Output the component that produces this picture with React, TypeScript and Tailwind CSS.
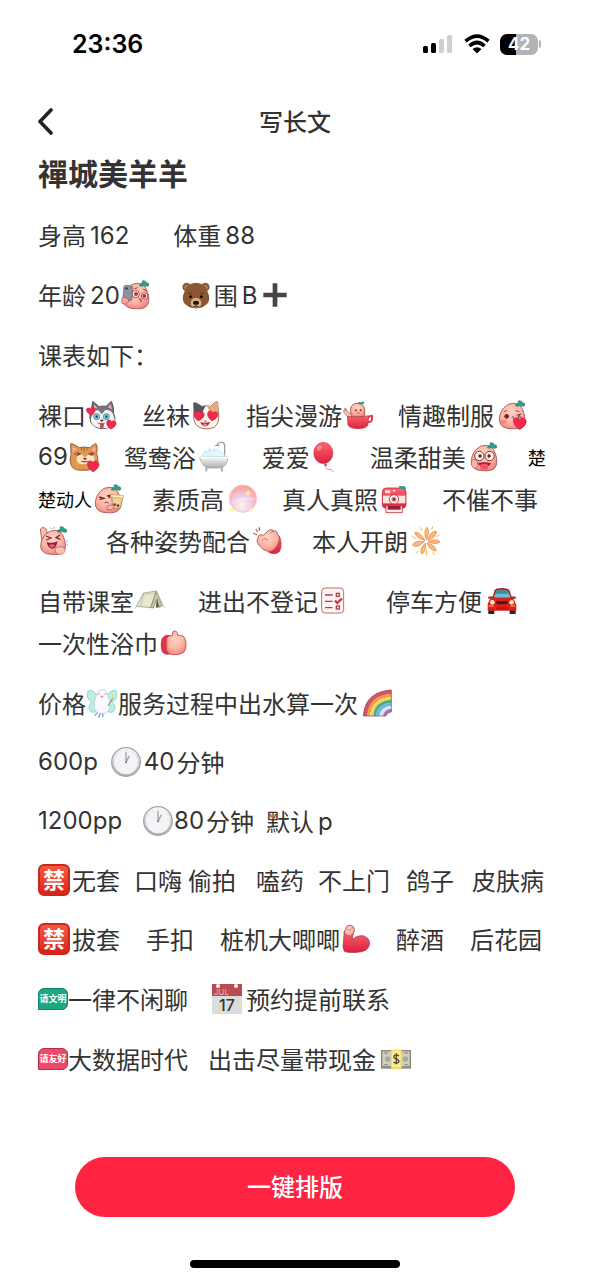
import type { ReactNode } from "react";

const LINE = "#a4514a";

function Svg({ children }: { children: ReactNode }) {
  return (
    <svg viewBox="0 0 96 96" className="size-8 shrink-0" aria-hidden="true">
      <defs>
        <radialGradient id="peach" cx="45%" cy="35%" r="70%">
          <stop offset="0" stopColor="#ffd3c4" />
          <stop offset="0.6" stopColor="#fbb3a4" />
          <stop offset="1" stopColor="#f07f7c" />
        </radialGradient>
        <linearGradient id="red" x1="0" y1="0" x2="0" y2="1">
          <stop offset="0" stopColor="#fb6570" />
          <stop offset="1" stopColor="#dc1f3c" />
        </linearGradient>
        <linearGradient id="silver" x1="0" y1="0" x2="0" y2="1">
          <stop offset="0" stopColor="#fafafa" />
          <stop offset="1" stopColor="#a9adb3" />
        </linearGradient>
      </defs>
      {children}
    </svg>
  );
}

function Leaf() {
  return (
    <path
      d="M58 20 Q60 12 68 13 Q62 4 72 5 Q78 6 79 11 Q88 10 86 20 Q79 25 72 19 Q66 24 58 20Z"
      fill="#27a383"
      stroke="#16775f"
      strokeWidth="1.5"
    />
  );
}

function PeachBody() {
  return (
    <path
      d="M52 13 Q74 12 83 40 Q91 66 81 80 Q70 92 42 89 Q14 88 10 66 Q9 43 23 27 Q36 12 52 13Z"
      fill="url(#peach)"
      stroke={LINE}
      strokeWidth="2.5"
    />
  );
}

function Heart({ at }: { at: string }) {
  return (
    <path
      transform={at}
      d="M0 12 C-17 1 -14 -12 -6 -12 Q-1 -12 0 -7 Q3 -13 9 -11 C18 -6 12 6 0 12Z"
      fill="#f5274c"
      stroke="#b31c35"
      strokeWidth="1.5"
    />
  );
}

function Selfie() {
  return (
    <Svg>
      <PeachBody />
      <Leaf />
      <circle cx="47" cy="45" r="11" fill="#fff3ef" stroke="#9b2b32" strokeWidth="2.5" />
      <circle cx="48" cy="45" r="6" fill="#c02b3a" />
      <circle cx="74" cy="51" r="10" fill="#fff3ef" stroke="#9b2b32" strokeWidth="2.5" />
      <circle cx="73" cy="51" r="6" fill="#c02b3a" />
      <path d="M56 60 q9 -2 5 4 q8 1 0 6" fill="none" stroke="#8f2630" strokeWidth="3" />
      <path d="M43 29 l10 -3 M70 31 l10 4" stroke="#8f3b35" strokeWidth="3" />
      <rect x="10" y="20" width="27" height="44" rx="5" fill="#8b939d" stroke="#5d646f" strokeWidth="2" transform="rotate(5 25 42)" />
      <circle cx="20" cy="28" r="3.5" fill="#2e3440" />
      <path d="M5 64 Q5 52 15 56 Q27 57 26 68 Q20 78 9 75 Q4 72 5 64Z" fill="#f9a498" stroke={LINE} strokeWidth="2" />
    </Svg>
  );
}

function Bear() {
  return (
    <Svg>
      <circle cx="20" cy="24" r="13" fill="#8c5a38" />
      <circle cx="76" cy="24" r="13" fill="#8c5a38" />
      <circle cx="20" cy="25" r="7" fill="#b17e55" />
      <circle cx="76" cy="25" r="7" fill="#b17e55" />
      <path d="M48 11 Q76 12 82 37 Q93 59 83 73 Q69 89 48 88 Q27 89 13 73 Q3 59 14 37 Q20 12 48 11Z" fill="#8b5735" />
      <ellipse cx="48" cy="72" rx="16" ry="15" fill="#d9b183" />
      <ellipse cx="48" cy="71" rx="9" ry="6" fill="#1c1512" />
      <path d="M48 76 v6 M40 82 q8 5 16 0" stroke="#39261a" strokeWidth="3" fill="none" />
      <circle cx="32" cy="53" r="4.500" fill="#17110e" />
      <circle cx="64" cy="53" r="4.500" fill="#17110e" />
      <path d="M24 42 l12 3 M72 42 l-12 3" stroke="#5c351e" strokeWidth="3" />
    </Svg>
  );
}

function Plus() {
  return (
    <Svg>
      <path d="M41 13 h14 v28 h28 v14 h-28 v28 h-14 v-28 h-28 v-14 h28z" fill="#454545" />
    </Svg>
  );
}

function Husky() {
  return (
    <Svg>
      <path d="M15 38 L20 7 L40 23 Q51 20 60 22 L76 7 Q84 20 83 44 Q92 63 80 78 Q67 90 48 89 Q20 87 13 66 Q9 49 15 38Z" fill="#77747f" stroke="#4b4a55" strokeWidth="2.5" />
      <path d="M22 29 l3 -12 9 10z M66 25 l8 -9 4 15z" fill="#f7a99d" />
      <path d="M16 55 Q20 30 37 34 L47 46 L58 33 Q78 30 83 52 Q91 73 74 83 Q49 93 24 81 Q11 69 16 55Z" fill="#fbf3ee" />
      <circle cx="32" cy="53" r="9" fill="#8ddcf3" stroke="#397d96" strokeWidth="2.5" />
      <circle cx="61" cy="53" r="9" fill="#8ddcf3" stroke="#397d96" strokeWidth="2.5" />
      <circle cx="32" cy="53" r="4" fill="#244c60" />
      <circle cx="61" cy="53" r="4" fill="#244c60" />
      <path d="M43 63 h9 l-5 5z" fill="#512d31" stroke="#512d31" strokeWidth="2" />
      <path d="M35 72 Q47 75 57 72 M43 75 v10 q5 6 9 0 v-10z" fill="#f0476a" stroke="#873d46" strokeWidth="2" />
      <Heart at="translate(15 37) rotate(-15)" />
      <Heart at="translate(75 77) rotate(8) scale(1.1)" />
    </Svg>
  );
}

function Cat() {
  return (
    <Svg>
      <path d="M12 45 L11 12 Q15 7 35 22 Q49 18 62 22 Q80 3 83 9 L86 49 Q88 74 72 85 Q47 96 23 82 Q8 69 12 45Z" fill="#fff4eb" stroke="#92523c" strokeWidth="2.5" />
      <path d="M12 43 L11 12 Q15 8 35 22 L46 21 L38 39Z" fill="#55565c" />
      <path d="M52 20 L63 22 Q80 4 83 10 L85 43 L57 36Z" fill="#e9a974" />
      <Heart at="translate(26 51) rotate(8) scale(1.2)" />
      <Heart at="translate(67 51) rotate(8) scale(1.2)" />
      <path d="M31 70 q15 3 29 -1 q-5 13 -15 13 q-10 0 -14 -12Z" fill="#b32643" />
      <path d="M37 76 q8 -5 15 1 q-7 11 -15 -1Z" fill="#ff7890" />
      <path d="M42 65 h9 l-5 4z" fill="#5c2b2f" />
    </Svg>
  );
}

function Cup() {
  return (
    <Svg>
      <path d="M26 52 V27 Q30 13 47 13 Q65 14 68 30 V53Z" fill="url(#peach)" stroke={LINE} strokeWidth="2.5" />
      <path d="M46 14 Q49 6 58 10 Q65 4 67 14 Q58 18 46 14Z" fill="#27a383" />
      <path d="M24 59 L5 40 Q4 31 10 36 L8 27 Q12 25 16 37 L29 48Z" fill="#fac0b0" stroke={LINE} strokeWidth="2" />
      <path d="M76 58 Q93 43 90 57 Q92 70 77 69" fill="none" stroke="#e9344c" strokeWidth="6" />
      <path d="M16 52 Q47 59 80 50 L78 77 Q73 89 47 89 Q22 88 18 78Z" fill="url(#red)" stroke="#c22f40" strokeWidth="2" />
      <circle cx="42" cy="34" r="3" fill="#792f2e" />
      <circle cx="56" cy="34" r="3" fill="#792f2e" />
      <path d="M44 41 q5 4 9 0" fill="none" stroke="#792f2e" strokeWidth="2" />
    </Svg>
  );
}

function KissPeach() {
  return (
    <Svg>
      <PeachBody />
      <Leaf />
      <circle cx="32" cy="52" r="7" fill="#7f2028" />
      <path d="M62 49 l12 -4 -8 9 11 1" fill="none" stroke="#7f2028" strokeWidth="3" />
      <path d="M47 54 q9 -2 5 5 q8 2 0 6" fill="none" stroke="#9d2b35" strokeWidth="3" />
      <ellipse cx="23" cy="68" rx="9" ry="6" fill="#f46d79" opacity=".6" />
      <path d="M23 39 l10 -5 M58 35 l12 3" stroke={LINE} strokeWidth="3" />
      <Heart at="translate(71 74) scale(1.45)" />
    </Svg>
  );
}

function FoxCat() {
  return (
    <Svg>
      <path d="M9 44 L8 8 Q11 6 34 20 Q50 16 65 20 L83 7 Q90 13 86 38 Q96 64 79 79 Q63 91 41 88 Q13 88 9 70 Q3 57 9 44Z" fill="#e0984c" stroke="#8c472d" strokeWidth="2.5" />
      <path d="M13 19 l13 5 -12 10z M81 17 l-11 8 12 9z" fill="#f5b0a1" />
      <path d="M26 58 Q24 39 42 40 L50 50 L63 38 Q84 42 79 58 Q67 76 50 68 Q33 75 26 58Z" fill="#ffe2bf" />
      <path d="M48 20 v11 M40 22 v6 M57 22 v6" stroke="#a75133" strokeWidth="3" />
      <path d="M20 39 Q28 31 38 39 Q29 47 20 39Z M61 39 Q70 31 80 38 Q71 47 61 39Z" fill="#fff" stroke="#81302d" strokeWidth="2.5" />
      <circle cx="31" cy="39" r="4" fill="#8c3b2f" />
      <circle cx="71" cy="39" r="4" fill="#8c3b2f" />
      <path d="M46 52 h10 l-5 5z M39 61 q11 5 22 -1" fill="#a7273d" stroke="#a7273d" strokeWidth="2" />
      <Heart at="translate(75 76) scale(1.35)" />
    </Svg>
  );
}

function Bathtub() {
  return (
    <Svg>
      <path d="M80 51 V13 Q79 3 68 4 Q57 5 58 15" fill="none" stroke="#9b9fa3" strokeWidth="4" />
      <path d="M49 15 q9 -7 18 0z" fill="#8a9095" />
      <path d="M14 45 Q13 28 27 35 Q33 17 45 31 Q56 19 65 33 Q80 31 79 47Z" fill="#e2f8ff" stroke="#b5e3ef" strokeWidth="2" />
      <path d="M23 27 v9 M35 23 v10 M48 25 v8 M61 19 v9" stroke="#8bd5ec" strokeWidth="3" strokeDasharray="3 4" />
      <path d="M4 48 H90 Q90 74 68 81 H29 Q12 76 4 48Z" fill="url(#silver)" stroke="#989da3" strokeWidth="2" />
      <path d="M25 79 v10 M72 77 v12" stroke="#aeb2b7" strokeWidth="6" strokeLinecap="round" />
      <path d="M4 49 H90" stroke="#fff" strokeWidth="4" />
    </Svg>
  );
}

function Balloon() {
  return (
    <Svg>
      <ellipse cx="40" cy="36" rx="29" ry="32" fill="url(#red)" stroke="#d42e46" strokeWidth="1.5" />
      <ellipse cx="28" cy="21" rx="6" ry="9" fill="#ff9ba0" opacity=".7" transform="rotate(35 28 21)" />
      <path d="M46 67 l-5 8 12 -2Z" fill="#cf2842" />
      <path d="M48 75 Q45 85 57 85 Q68 85 70 93" fill="none" stroke="#ba8790" strokeWidth="2.5" />
    </Svg>
  );
}

function GlassesPeach() {
  return (
    <Svg>
      <PeachBody />
      <Leaf />
      <circle cx="34" cy="45" r="14" fill="#fff0e9" stroke="#923333" strokeWidth="3" />
      <circle cx="65" cy="45" r="14" fill="#fff0e9" stroke="#923333" strokeWidth="3" />
      <circle cx="36" cy="45" r="5" fill="#581d25" />
      <circle cx="63" cy="45" r="5" fill="#581d25" />
      <path d="M29 66 Q48 61 70 66 Q64 78 48 78 Q34 78 29 66Z" fill="#9f2338" />
      <path d="M37 71 Q49 65 60 71 V83 Q50 90 37 83Z" fill="#fa5365" />
      <path d="M10 59 q12 -9 18 3 q4 15 -5 20 q-14 0 -13 -23Z" fill="#fbb4a4" stroke={LINE} strokeWidth="2" />
    </Svg>
  );
}

function TeaPeach() {
  return (
    <Svg>
      <PeachBody />
      <Leaf />
      <path d="M21 42 l15 4 -13 4 M45 39 l14 -3 -9 9" fill="none" stroke="#81272b" strokeWidth="4" />
      <path d="M38 59 q7 -5 12 2" fill="none" stroke="#a33c3e" strokeWidth="3" />
      <path d="M59 40 L92 43 L86 75 Q74 80 62 73Z" fill="#efd09a" stroke="#955e40" strokeWidth="2" />
      <path d="M56 34 L95 38 L93 46 L56 42Z" fill="#fff0bb" stroke="#d1953f" strokeWidth="2" />
      <circle cx="68" cy="65" r="4" fill="#6a3e2e" />
      <circle cx="78" cy="68" r="4" fill="#6a3e2e" />
      <path d="M45 70 Q60 61 66 73 Q58 85 45 79Z" fill="#fbb4a4" stroke={LINE} strokeWidth="2" />
    </Svg>
  );
}

function Pearl() {
  return (
    <Svg>
      <defs>
        <radialGradient id="pearl" cx="45%" cy="75%" r="75%">
          <stop offset="0" stopColor="#fff3ea" />
          <stop offset="0.45" stopColor="#f0cdea" />
          <stop offset="1" stopColor="#fa9a92" />
        </radialGradient>
      </defs>
      <circle cx="51" cy="47" r="41" fill="url(#pearl)" stroke="#fbc8ba" strokeWidth="3" />
      <path d="M17 61 Q46 39 86 49" stroke="#fff" strokeWidth="5" opacity=".35" fill="none" />
      <path d="M66 19 l3 9 9 3 -9 3 -3 9 -3 -9 -9 -3 9 -3z M17 70 l3 9 9 3 -9 3 -3 9 -3 -9 -9 -3 9 -3z M76 73 l2 6 6 2 -6 2 -2 6 -2 -6 -6 -2 6 -2z" fill="#fff39b" />
    </Svg>
  );
}

function Camera() {
  return (
    <Svg>
      <rect x="13" y="15" width="71" height="61" rx="12" fill="url(#red)" stroke="#c02c40" strokeWidth="2.5" />
      <path d="M62 12 Q64 5 73 10 Q84 7 84 17 Q73 22 62 12Z" fill="#27a383" />
      <rect x="21" y="22" width="16" height="9" rx="3" fill="#ffe7e2" />
      <circle cx="48" cy="23" r="3" fill="#fff" />
      <path d="M15 38 H82 V61 H15Z" fill="#ffe3e0" />
      <circle cx="48" cy="49" r="14" fill="#fff2ed" stroke="#c93a50" strokeWidth="3" />
      <circle cx="48" cy="49" r="7" fill="#d4687a" />
      <circle cx="48" cy="49" r="3" fill="#651c2b" />
      <path d="M24 68 H73 V89 H24Z" fill="#ffefea" stroke="#c02c40" strokeWidth="2.5" />
      <path d="M29 69 H68 V80 H29Z" fill="#9f1c31" />
    </Svg>
  );
}

function LaughPeach() {
  return (
    <Svg>
      <path d="M12 48 L7 15 Q9 5 20 9 Q29 12 27 40Z" fill="#fac0b0" stroke={LINE} strokeWidth="2.5" />
      <path d="M52 16 Q71 15 78 40 Q87 65 77 79 Q67 91 42 88 Q11 88 8 66 Q8 43 23 27 Q36 15 52 16Z" fill="url(#peach)" stroke={LINE} strokeWidth="2.5" />
      <Leaf />
      <path d="M24 33 l15 6 -14 6 M66 30 l-12 8 13 5" fill="none" stroke="#772127" strokeWidth="3.5" />
      <path d="M26 51 Q43 57 58 49 Q57 68 43 72 Q29 68 26 51Z" fill="#8e2036" />
      <path d="M33 60 Q42 55 51 60 Q43 76 33 60Z" fill="#ff5b71" />
      <path d="M52 69 Q71 59 82 73 Q80 90 60 88 Q49 83 52 69Z" fill="#fac0b0" stroke={LINE} strokeWidth="2" />
      <path d="M38 8 l4 4 M48 5 v6 M84 48 l5 2 M85 56 l4 4" stroke="#55b9d8" strokeWidth="3" />
    </Svg>
  );
}

function Clap() {
  return (
    <Svg>
      <path d="M55 26 L82 33 Q93 60 82 80 Q68 91 50 82Z" fill="url(#red)" stroke="#a13440" strokeWidth="2" />
      <path d="M18 39 Q19 25 34 31 L50 16 Q60 10 65 18 Q76 16 77 29 Q87 35 80 51 Q74 72 55 80 Q36 79 24 64 Q10 49 18 39Z" fill="url(#peach)" stroke={LINE} strokeWidth="2.5" />
      <path d="M30 47 q8 -12 18 -1 M65 18 q-5 1 -9 6" fill="none" stroke={LINE} strokeWidth="2" />
      <path d="M5 25 l9 4 M12 13 l5 7 M22 8 v8" stroke="#a8322f" strokeWidth="3" strokeLinecap="round" />
    </Svg>
  );
}

function Fireworks() {
  return (
    <Svg>
      <g fill="#ffba6d" stroke="#e8744c" strokeWidth="2">
        <path d="M45 46 Q20 40 14 23 Q27 17 45 46Z" />
        <path d="M49 44 Q39 18 51 7 Q61 18 49 44Z" />
        <path d="M53 46 Q61 17 79 19 Q80 37 53 46Z" />
        <path d="M54 50 Q79 39 90 50 Q79 61 54 50Z" />
        <path d="M51 54 Q79 61 78 78 Q61 78 51 54Z" />
        <path d="M46 54 Q49 80 36 87 Q25 76 46 54Z" />
        <path d="M43 50 Q20 71 8 61 Q10 47 43 50Z" />
      </g>
      <g fill="none" stroke="#f6b92b" strokeWidth="3" strokeLinecap="round">
        <path d="M31 8 l4 8 M68 5 l-3 9 M87 31 l-7 4 M7 35 l10 5 M24 78 l-5 7 M50 77 v12 M69 83 l4 6" />
      </g>
    </Svg>
  );
}

function Tent() {
  return (
    <Svg>
      <path d="M7 64 L29 24 L67 18 L50 68Z" fill="#e8e8cf" stroke="#8d8d74" strokeWidth="2" />
      <path d="M67 18 L50 68 L58 69 L69 43 L75 67 L85 63Z" fill="#c5c5a2" stroke="#7c7c62" strokeWidth="2" />
      <path d="M69 41 L65 68 L75 67Z" fill="#5d5e4a" />
      <path d="M29 24 L20 64 M67 18 L92 69 M7 64 L2 72 M25 30 L63 24" stroke="#a3a38b" strokeWidth="1.5" />
    </Svg>
  );
}

function Checklist() {
  return (
    <Svg>
      <rect x="11" y="9" width="66" height="75" rx="10" fill="#fff5f2" stroke="#b97073" strokeWidth="3" />
      <g fill="none" stroke="#a6424d" strokeWidth="4">
        <path d="M21 30 h23 M21 49 h23 M21 68 h23" />
        <rect x="55" y="25" width="9" height="9" />
        <rect x="55" y="63" width="9" height="9" />
      </g>
      <path d="M51 47 l7 7 14 -13" stroke="#dd2e43" strokeWidth="7" fill="none" />
    </Svg>
  );
}

function Car() {
  return (
    <Svg>
      <path d="M10 38 H86" stroke="#aa251d" strokeWidth="7" strokeLinecap="round" />
      <path d="M18 42 L26 16 Q30 9 48 9 Q67 9 71 17 L79 42Z" fill="#b51b17" />
      <path d="M23 38 L31 17 Q47 11 66 18 L74 38Z" fill="#68bfd1" />
      <path d="M31 17 Q47 11 66 18 L69 26 H27Z" fill="#3d8da4" />
      <path d="M7 70 V87 H25 V72 M71 72 V87 H89 V68" fill="#252527" />
      <path d="M12 43 Q17 35 30 38 H67 Q83 37 86 48 L91 61 V77 H5 V57Z" fill="#dc211c" />
      <circle cx="19" cy="52" r="7" fill="#ffeeb0" />
      <circle cx="77" cy="52" r="7" fill="#ffeeb0" />
      <path d="M29 49 H66 L62 58 H34Z" fill="#49191a" />
      <path d="M32 67 H64 V74 H32Z" fill="#b81614" />
      <path d="M8 63 h15 M73 63 h15" stroke="#ff795d" strokeWidth="4" />
    </Svg>
  );
}

function Thumb() {
  return (
    <Svg>
      <path d="M13 34 Q23 21 38 27 V80 Q24 86 13 75 Q6 54 13 34Z" fill="#e83148" stroke="#a7313b" strokeWidth="2.5" />
      <path d="M25 44 Q25 24 43 26 L45 14 Q54 7 58 18 L59 25 Q78 22 82 38 Q88 60 78 75 Q64 86 37 82 Q22 78 25 44Z" fill="url(#peach)" stroke="#c14649" strokeWidth="2.5" />
      <path d="M30 39 Q25 58 33 76" fill="none" stroke="#f08b88" strokeWidth="3" />
    </Svg>
  );
}

function Fairy() {
  return (
    <Svg>
      <g fill="#b9efe1" stroke="#86cfca" strokeWidth="2.5">
        <path d="M42 40 Q22 2 6 12 Q-2 34 18 46 Q2 58 14 74 Q30 82 42 60Z" />
        <path d="M54 40 Q74 2 90 12 Q98 34 78 46 Q94 58 82 74 Q66 82 54 60Z" />
      </g>
      <path d="M48 8 Q63 8 65 26 Q76 44 70 66 Q62 82 46 80 Q28 78 25 62 Q23 42 31 26 Q34 8 48 8Z" fill="#f9faff" stroke="#b6c2df" strokeWidth="2" />
      <path d="M40 26 h15 l-7 7z" fill="#ee9498" />
      <circle cx="38" cy="21" r="2" fill="#7d7b97" />
      <circle cx="58" cy="21" r="2" fill="#7d7b97" />
      <path d="M34 77 l-8 9 M42 80 l-4 12 M50 80 v10" stroke="#7d99c5" strokeWidth="4" />
      <path d="M66 57 L80 34" stroke="#778b42" strokeWidth="3" />
      <path d="M76 34 l5 -11 4 13z" fill="#f5d35c" />
    </Svg>
  );
}

function Rainbow() {
  return (
    <Svg>
      <g fill="none" strokeWidth="9">
        <path d="M10 87 Q14 20 88 15" stroke="#d95162" strokeWidth="12" />
        <path d="M20 87 Q24 30 88 25" stroke="#f19c4a" />
        <path d="M29 87 Q33 39 88 34" stroke="#f5d455" />
        <path d="M38 87 Q42 47 88 43" stroke="#50a984" />
        <path d="M47 87 Q51 56 88 52" stroke="#67b8df" />
        <path d="M57 87 Q60 65 88 61" stroke="#d8e7ff" />
        <path d="M67 87 Q70 73 88 70" stroke="#a86fc5" />
      </g>
      <path d="M4 87 Q9 14 88 9 V75 Q74 76 72 87Z" fill="none" stroke="#6f4650" strokeWidth="2" />
    </Svg>
  );
}

function Clock() {
  return (
    <Svg>
      <circle cx="48" cy="48" r="43" fill="url(#silver)" stroke="#a4a7ac" strokeWidth="4" />
      <circle cx="48" cy="49" r="36" fill="#f3f4f5" />
      <circle cx="48" cy="48" r="35" fill="none" stroke="#9da1a7" strokeWidth="3" strokeDasharray="1 17.3" />
      <path d="M48 49 V19 M48 49 L57 31" stroke="#a0a4ab" strokeWidth="4" strokeLinecap="round" />
      <circle cx="48" cy="49" r="3" fill="#777d85" />
    </Svg>
  );
}

function Forbidden() {
  return (
    <span className="flex size-8 shrink-0 items-center justify-center rounded-md border-2 border-[#c92720] bg-linear-to-b from-[#f45742] to-[#db2117] pb-1 text-[22px] leading-none font-bold text-white">
      禁
    </span>
  );
}

function Muscle() {
  return (
    <Svg>
      <path d="M9 72 L13 24 L40 31 L36 51 Q48 37 68 38 Q90 43 89 64 Q84 84 60 87 Q27 91 13 85Z" fill="url(#red)" stroke="#a22c3c" strokeWidth="2" />
      <path d="M12 30 L20 10 Q28 3 38 9 Q48 18 40 32 Q32 44 22 38Z" fill="url(#peach)" stroke={LINE} strokeWidth="2.5" />
      <path d="M22 18 q5 8 11 0 M36 51 Q43 50 47 56" fill="none" stroke={LINE} strokeWidth="2" />
    </Svg>
  );
}

function Calendar() {
  return (
    <span className="relative flex size-[30px] shrink-0 flex-col bg-[#dcdcdd] text-center font-['Inter',sans-serif]">
      <span className="h-3 bg-[#b84c50] pt-1 pl-0.5 text-left text-[8px] leading-2 text-[#eab4b5]">JUL</span>
      <span className="text-[16px] leading-[18px] font-medium text-[#333]">17</span>
      <span className="absolute top-0 left-1 size-1 rounded-full bg-white" />
      <span className="absolute top-0 right-1 size-1 rounded-full bg-white" />
    </span>
  );
}

function Sign({ green, text }: { green?: boolean; text: string }) {
  return (
    <span
      className={
        green
          ? "flex h-[22px] w-[30px] shrink-0 items-center justify-center rounded-md rounded-bl-none border border-[#138267] bg-[#1ea780] pb-0.5 text-[9px] leading-none font-bold text-white"
          : "flex h-[22px] w-[30px] shrink-0 items-center justify-center rounded-md rounded-bl-none border border-[#b82f4c] bg-[#ee4a68] pb-0.5 text-[9px] leading-none font-bold text-white"
      }
    >
      {text}
    </span>
  );
}

function Money() {
  return (
    <Svg>
      <rect x="3" y="21" width="90" height="56" fill="#8d8c7c" />
      <rect x="6" y="24" width="84" height="47" fill="#cfcec0" stroke="#85846f" strokeWidth="2" />
      <path d="M12 30 h12 M12 65 h12 M73 30 h11 M73 65 h11" stroke="#9a9987" strokeWidth="4" />
      <circle cx="23" cy="48" r="8" fill="#aaa994" />
      <circle cx="76" cy="48" r="8" fill="#aaa994" />
      <path d="M33 20 H65 V79 H33Z" fill="#f7d954" />
      <path d="M36 23 H62 V72 H36Z" fill="#fbe995" />
      <path d="M57 39 Q48 32 42 39 Q40 46 49 48 Q59 51 56 58 Q48 64 41 57 M49 31 V64" fill="none" stroke="#514b29" strokeWidth="4" />
    </Svg>
  );
}

function Row({ children }: { children: ReactNode }) {
  return <div className="flex h-[42px] items-center whitespace-nowrap">{children}</div>;
}

function Num({ children }: { children: ReactNode }) {
  return <span className="font-['Inter',sans-serif] text-2xl leading-[42px]">{children}</span>;
}

function StatusBar() {
  return (
    <div className="flex h-[88px] items-center justify-between pr-[49px] pl-[72px] text-black">
      <span className="font-['Inter',sans-serif] text-[25px] leading-8 font-semibold">23:36</span>
      <div className="flex items-center gap-2.5">
        <svg viewBox="0 0 31 20" className="h-5 w-[31px]" aria-hidden="true">
          <rect x="0" y="12" width="5" height="7" rx="1.6" />
          <rect x="8" y="9" width="5" height="10" rx="1.6" />
          <rect x="16" y="5" width="5" height="14" rx="1.6" fill="#d0d0d0" />
          <rect x="24" y="1" width="5" height="18" rx="1.6" fill="#d0d0d0" />
        </svg>
        <svg viewBox="0 0 26 20" className="h-5 w-[26px]" fill="none" stroke="#000" strokeWidth="3.6" aria-hidden="true">
          <path d="M1.5 7.2 Q13 -3 24.5 7.2" />
          <path d="M5.5 12 Q13 5 20.5 12" />
          <path d="M13 19.5 L8.5 15 Q13 11.5 17.5 15Z" fill="#000" stroke="none" />
        </svg>
        <div className="flex items-center gap-px">
          <span className="flex h-[21px] w-[38px] items-center justify-center rounded-[7px] bg-linear-to-r from-black from-42% to-[#b4b4b4] to-42% font-['Inter',sans-serif] text-[17px] leading-none font-bold text-white">
            42
          </span>
          <span className="h-2 w-0.5 rounded-r-full bg-[#b4b4b4]" />
        </div>
      </div>
    </div>
  );
}

export default function App() {
  return (
    <div className="flex min-h-screen flex-col bg-white font-['Noto_Sans_CJK_SC',sans-serif] text-[#333]">
      <StatusBar />
      <header className="grid h-[66px] grid-cols-[1fr_auto_1fr] items-center px-[38px]">
        <button type="button" aria-label="返回" className="justify-self-start">
          <svg viewBox="0 0 16 28" className="h-7 w-4" fill="none" stroke="#222" strokeWidth="3.6" strokeLinecap="round" strokeLinejoin="round" aria-hidden="true">
            <path d="M13 3 L2 14.500 L13 26" />
          </svg>
        </button>
        <span className="text-2xl font-medium">写长文</span>
      </header>

      <main className="flex flex-col gap-[18px] px-[38px] text-2xl leading-[42px]">
        <h1 className="h-[42px] text-[30px] leading-9 font-bold">禪城美羊羊</h1>

        <Row>
          身高<span className="ml-1"><Num>162</Num></span>
          <span className="ml-11">体重</span><span className="ml-1"><Num>88</Num></span>
        </Row>
        <Row>
          年龄<span className="ml-1"><Num>20</Num></span><Selfie />
          <span className="ml-7"><Bear /></span>
          <span className="ml-0.5">围</span><span className="ml-1"><Num>B</Num></span>
          <span className="ml-0.5"><Plus /></span>
        </Row>
        <Row>课表如下：</Row>

        <div>
          <Row>
            裸口<Husky />
            <span className="ml-6">丝袜</span><Cat />
            <span className="ml-6">指尖漫游</span><Cup />
            <span className="ml-6">情趣制服</span><span className="ml-0.5"><KissPeach /></span>
          </Row>
          <Row>
            <Num>69</Num><FoxCat />
            <span className="ml-6">鸳鸯浴</span><span className="ml-0.5"><Bathtub /></span>
            <span className="ml-8">爱爱</span><Balloon />
            <span className="ml-7">温柔甜美</span><span className="ml-0.5"><GlassesPeach /></span>
            <span className="ml-7 text-lg text-black">楚</span>
          </Row>
          <Row>
            <span className="text-lg text-black">楚动人</span><TeaPeach />
            <span className="ml-7">素质高</span><span className="ml-0.5"><Pearl /></span>
            <span className="ml-6">真人真照</span><Camera />
            <span className="ml-8">不催不事</span>
          </Row>
          <Row>
            <LaughPeach />
            <span className="ml-9">各种姿势配合</span><span className="ml-0.5"><Clap /></span>
            <span className="ml-7">本人开朗</span><span className="ml-0.5"><Fireworks /></span>
          </Row>
        </div>

        <div>
          <Row>
            自带课室<Tent />
            <span className="ml-8">进出不登记</span><Checklist />
            <span className="ml-9">停车方便</span><span className="ml-1"><Car /></span>
          </Row>
          <Row>一次性浴巾<Thumb /></Row>
        </div>

        <div className="flex flex-col gap-[17px]">
          <Row>价格<Fairy />服务过程中出水算一次<span className="ml-1"><Rainbow /></span></Row>
          <Row>
            <Num>600p</Num>
            <span className="mr-0.5 ml-3"><Clock /></span><Num>40</Num><span className="ml-0.5">分钟</span>
          </Row>
          <Row>
            <Num>1200pp</Num>
            <span className="ml-5"><Clock /></span><Num>80</Num><span className="ml-0.5">分钟</span>
            <span className="ml-3">默认</span><span className="ml-1"><Num>p</Num></span>
          </Row>
          <Row>
            <Forbidden />
            <span className="ml-0.5">无套</span>
            <span className="ml-3.5">口嗨</span>
            <span className="ml-1.5">偷拍</span>
            <span className="ml-5">嗑药</span>
            <span className="ml-3.5">不上门</span>
            <span className="ml-4">鸽子</span>
            <span className="ml-4.5">皮肤病</span>
          </Row>
          <Row>
            <Forbidden />
            <span className="ml-0.5">拔套</span>
            <span className="ml-6.5">手扣</span>
            <span className="ml-6.5">桩机大唧唧</span><Muscle />
            <span className="ml-6">醉酒</span>
            <span className="ml-6.5">后花园</span>
          </Row>
        </div>

        <Row>
          <Sign green text="请文明" />一律不闲聊
          <span className="mr-1 ml-6 flex"><Calendar /></span>预约提前联系
        </Row>
        <Row>
          <Sign text="请友好" />大数据时代
          <span className="ml-5">出击尽量带现金</span><span className="ml-1"><Money /></span>
        </Row>
      </main>

      <footer className="mt-auto flex flex-col items-center gap-[43px] px-[75px] pb-3">
        <button type="button" className="h-[60px] w-full rounded-full bg-[#ff2442] pb-0.5 text-2xl font-medium text-white">
          一键排版
        </button>
        <span className="h-2 w-[210px] rounded-full bg-black" />
      </footer>
    </div>
  );
}
